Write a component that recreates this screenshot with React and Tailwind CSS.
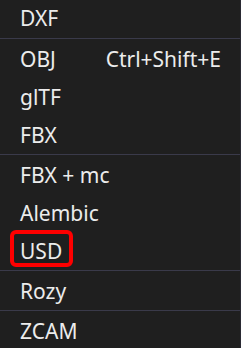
import React from 'react';

const groups = [
  [{ label: 'DXF' }],
  [{ label: 'OBJ', shortcut: 'Ctrl+Shift+E' }, { label: 'glTF' }, { label: 'FBX' }],
  [{ label: 'FBX + mc' }, { label: 'Alembic' }, { label: 'USD', marked: true }],
  [{ label: 'Rozy' }],
  [{ label: 'ZCAM' }],
];

const MenuRow = ({ item, first }) => (
  <div
    className={`relative flex items-center justify-between h-[38px] pl-[20px] pr-[19px] ${first ? 'pb-[2px]' : ''}`}
  >
    <span>{item.label}</span>
    {item.shortcut && <span>{item.shortcut}</span>}
    {item.marked && (
      <div className="absolute left-[10px] top-[-2px] w-[63px] h-[37px] border-[4px] border-[#ff0000] rounded-[6px]" />
    )}
  </div>
);

const App = () => {
  return (
    <div
      className="w-[241px] h-[348px] overflow-hidden bg-[#1f1f1f] text-[#ececec] text-[21px] leading-none border-r border-[#2a2a33]"
      style={{ fontFamily: '"Noto Sans", "Open Sans", sans-serif' }}
    >
      {groups.map((group, gi) => (
        <div key={gi}>
          {gi > 0 && <div className="h-px mb-px bg-[#3a3a4a]" />}
          {group.map((item, i) => (
            <MenuRow key={item.label} item={item} first={gi === 0 && i === 0} />
          ))}
        </div>
      ))}
    </div>
  );
};

export default App;
